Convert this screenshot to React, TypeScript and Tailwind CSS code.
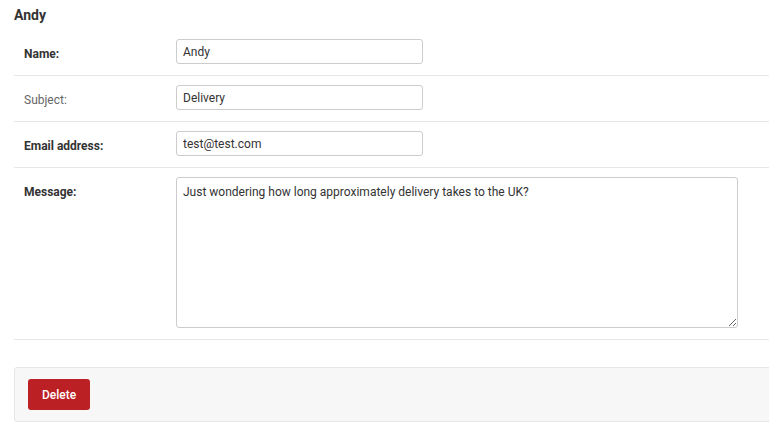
import React from 'react'

const font = { fontFamily: 'Roboto, "Liberation Sans", sans-serif' }

function Row({ label, bold = true, children }: { label: string; bold?: boolean; children: React.ReactNode }) {
  return (
    <div className="flex border-b border-[#e6e6e6] pt-[9px] pb-[11px]">
      <div className={`w-[162px] shrink-0 pl-[10px] pt-[8px] text-[12px] leading-[14px] ${bold ? 'font-bold text-[#333]' : 'text-[#666]'}`}>
        {label}
      </div>
      <div className="flex-1">{children}</div>
    </div>
  )
}

export default function App() {
  const input = 'block h-[25px] w-[247px] rounded-[3px] border border-[#cccccc] bg-white px-[6px] text-[12px] text-[#333] outline-none'
  return (
    <div className="min-h-[430px] bg-white pl-[14px]" style={font}>
      <h2 className="pt-[6px] h-[30px] text-[14px] font-bold leading-[18px] text-[#333]">Andy</h2>
      <Row label="Name:">
        <input className={input} defaultValue="Andy" />
      </Row>
      <Row label="Subject:" bold={false}>
        <input className={input} defaultValue="Delivery" />
      </Row>
      <Row label="Email address:">
        <input className={input} defaultValue="test@test.com" />
      </Row>
      <Row label="Message:">
        <textarea
          className="block h-[151px] w-[562px] resize rounded-[3px] border border-[#cccccc] bg-white px-[6px] py-[6px] text-[12px] leading-[16px] text-[#333] outline-none"
          defaultValue="Just wondering how long approximately delivery takes to the UK?"
        />
      </Row>
      <div className="mt-[27px] -mr-[4px] rounded-[3px] border border-[#e6e6e6] bg-[#f7f7f7] px-[13px] py-[11px]">
        <button className="block h-[31px] w-[62px] rounded-[3px] bg-[#bb2124] text-[12px] font-medium text-white">Delete</button>
      </div>
    </div>
  )
}
